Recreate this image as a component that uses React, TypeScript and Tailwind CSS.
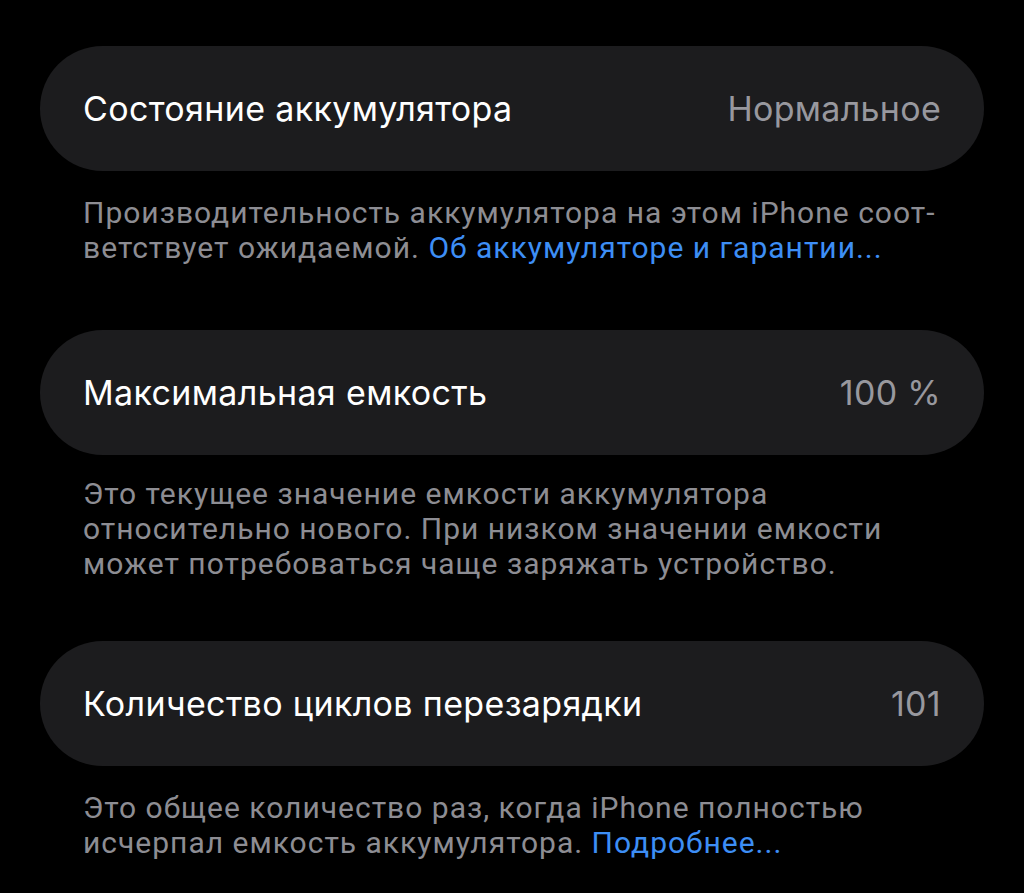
import React from 'react';

type Row = {
  title: string;
  value: string;
  lines: React.ReactNode[];
  mt: string;
  mb: string;
};

const Link = ({ children }: { children: React.ReactNode }) => (
  <span className="text-[#3d8ef5]">{children}</span>
);

const rows: Row[] = [
  {
    title: 'Состояние аккумулятора',
    value: 'Нормальное',
    lines: [
      'Производительность аккумулятора на этом iPhone соот-',
      <>
        ветствует ожидаемой. <Link>Об аккумуляторе и гарантии...</Link>
      </>,
    ],
    mt: 'mt-[24px]',
    mb: 'mb-[65px]',
  },
  {
    title: 'Максимальная емкость',
    value: '100 %',
    lines: [
      'Это текущее значение емкости аккумулятора',
      'относительно нового. При низком значении емкости',
      'может потребоваться чаще заряжать устройство.',
    ],
    mt: 'mt-[21px]',
    mb: 'mb-[60px]',
  },
  {
    title: 'Количество циклов перезарядки',
    value: '101',
    lines: [
      'Это общее количество раз, когда iPhone полностью',
      <>
        исчерпал емкость аккумулятора. <Link>Подробнее...</Link>
      </>,
    ],
    mt: 'mt-[24px]',
    mb: 'mb-0',
  },
];

export default function App() {
  return (
    <div className="min-h-[893px] w-full overflow-hidden bg-black px-[40px] pt-[46px] font-['Inter','Noto_Sans',sans-serif]">
      {rows.map((row) => (
        <section key={row.title}>
          <div className="flex h-[125px] items-center justify-between rounded-full bg-[#1c1c1e] px-[43px]">
            <span className="text-[34px] tracking-[0.35px] text-white">{row.title}</span>
            <span className="text-[34px] tracking-[0.3px] text-[#98989e]">{row.value}</span>
          </div>
          <div
            className={`${row.mt} ${row.mb} pl-[43px] font-['Roboto',sans-serif] text-[30px] leading-[35px] tracking-[1px] text-[#8d8d93]`}
          >
            {row.lines.map((line, i) => (
              <div key={i} className="whitespace-nowrap">
                {line}
              </div>
            ))}
          </div>
        </section>
      ))}
    </div>
  );
}
